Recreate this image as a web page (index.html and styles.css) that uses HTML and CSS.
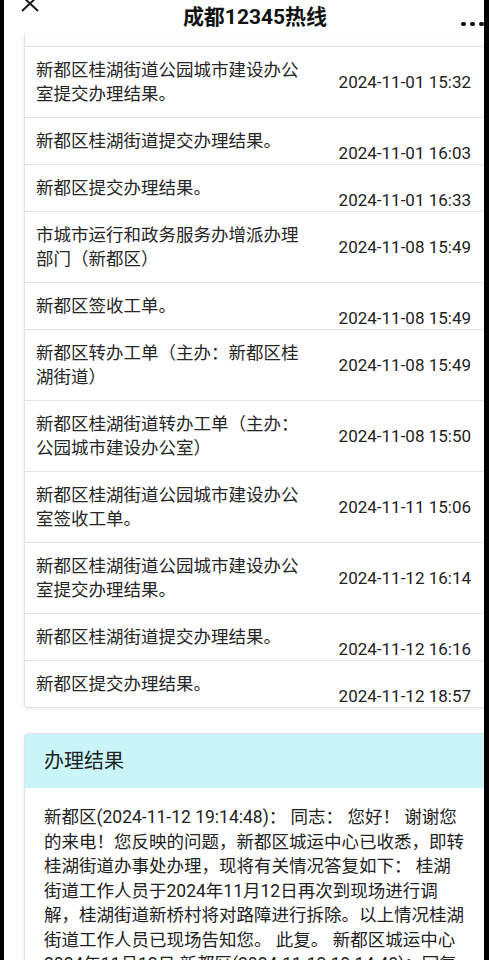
FILE: index.html
```html
<!DOCTYPE html>
<html lang="zh-CN">
<head>
    <meta charset="UTF-8">
    <meta name="viewport" content="width=device-width, initial-scale=1.0">
    <title>成都12345热线</title>
    <link rel="stylesheet" href="styles.css">
</head>
<body>
    <div class="screen">
        <header class="topbar">
            <span class="close">
                <svg width="18" height="18" viewBox="0 0 18 18"><path d="M1 1 L17 16 M17 1 L1 16" stroke="#1a1a1a" stroke-width="2" fill="none"/></svg>
            </span>
            <h1>成都12345热线</h1>
            <span class="more"><i></i><i></i><i></i></span>
        </header>

        <!-- 办理流程 -->
        <div class="card flow">
            <div class="flow-cut"></div>
            <div class="flow-row">
                <div class="flow-text">新都区桂湖街道公园城市建设办公室提交办理结果。</div>
                <div class="flow-time">2024-11-01 15:32</div>
            </div>
            <div class="flow-row">
                <div class="flow-text">新都区桂湖街道提交办理结果。</div>
                <div class="flow-time">2024-11-01 16:03</div>
            </div>
            <div class="flow-row">
                <div class="flow-text">新都区提交办理结果。</div>
                <div class="flow-time">2024-11-01 16:33</div>
            </div>
            <div class="flow-row">
                <div class="flow-text">市城市运行和政务服务办增派办理部门（新都区）</div>
                <div class="flow-time">2024-11-08 15:49</div>
            </div>
            <div class="flow-row">
                <div class="flow-text">新都区签收工单。</div>
                <div class="flow-time">2024-11-08 15:49</div>
            </div>
            <div class="flow-row">
                <div class="flow-text">新都区转办工单（主办：新都区桂湖街道）</div>
                <div class="flow-time">2024-11-08 15:49</div>
            </div>
            <div class="flow-row">
                <div class="flow-text">新都区桂湖街道转办工单（主办：公园城市建设办公室）</div>
                <div class="flow-time">2024-11-08 15:50</div>
            </div>
            <div class="flow-row">
                <div class="flow-text">新都区桂湖街道公园城市建设办公室签收工单。</div>
                <div class="flow-time">2024-11-11 15:06</div>
            </div>
            <div class="flow-row">
                <div class="flow-text">新都区桂湖街道公园城市建设办公室提交办理结果。</div>
                <div class="flow-time">2024-11-12 16:14</div>
            </div>
            <div class="flow-row">
                <div class="flow-text">新都区桂湖街道提交办理结果。</div>
                <div class="flow-time">2024-11-12 16:16</div>
            </div>
            <div class="flow-row">
                <div class="flow-text">新都区提交办理结果。</div>
                <div class="flow-time">2024-11-12 18:57</div>
            </div>
        </div>

        <!-- 办理结果 -->
        <div class="card result">
            <div class="result-head">办理结果</div>
            <div class="result-body">新都区(2024-11-12 19:14:48)： 同志： 您好！ 谢谢您的来电！您反映的问题，新都区城运中心已收悉，即转桂湖街道办事处办理，现将有关情况答复如下： 桂湖街道工作人员于2024年11月12日再次到现场进行调解，桂湖街道新桥村将对路障进行拆除。以上情况桂湖街道工作人员已现场告知您。 此复。 新都区城运中心2024年11月12日 新都区(2024-11-12 19:14:48)：回复</div>
        </div>
    </div>
</body>
</html>
```

FILE: styles.css
```css
body {
    margin: 0;
    background: #000; /* black edges of the photo */
    font-family: Roboto, "Noto Sans CJK SC", sans-serif;
    color: #262626;
}

.screen {
    margin-left: 4px;
    width: 480px;
    height: 960px;
    background: #fff;
    overflow: hidden;
}

/* Top bar */
.topbar {
    display: flex;
    align-items: center;
    height: 34px;
}

.close {
    width: 48px;
    align-self: flex-start;
    padding-left: 17px;
    margin-top: -5px;
    box-sizing: border-box;
    line-height: 0;
}

.topbar h1 {
    flex: 1;
    margin: 0;
    text-align: center;
    font-size: 21px;
    font-weight: bold;
    color: #111;
    line-height: 34px;
}

.more {
    width: 26px;
    display: flex;
    gap: 4.5px;
    align-self: flex-end;
    margin-bottom: 8px;
    padding-left: 3px;
    box-sizing: border-box;
}

.more i {
    width: 4.5px;
    height: 4.5px;
    border-radius: 50%;
    background: #111;
    flex: none;
}

/* Cards */
.card {
    margin-left: 20px;
    background: #fff;
    border: 1px solid #e2e4e6;
    border-right: none;
    border-radius: 4px 0 0 4px;
    box-shadow: 0 1px 4px rgba(0, 0, 0, 0.08);
}

.flow {
    border-top: none;
    border-radius: 0 0 0 4px;
}

.flow-cut {
    height: 12px;
}

.flow-row {
    display: flex;
    align-items: flex-start;
    padding: 11px 13px 11px 11px;
    border-top: 1px solid #e4e4e4;
    font-size: 17.5px;
    line-height: 24px;
}

.flow-text {
    width: 272px;
    flex: none;
}

.flow-time {
    margin-left: auto;
    margin-top: 12px;
    margin-bottom: -12px; /* sits low without growing the row */
    font-size: 17px;
    white-space: nowrap;
    color: #222;
}

.result {
    margin-top: 25px;
}

.result-head {
    background: #c9f5f8;
    height: 54px;
    line-height: 54px;
    padding-left: 19px;
    font-size: 20px;
    color: #222;
}

.result-body {
    padding: 17px 19px 20px 19px;
    font-size: 17.5px;
    line-height: 24.5px;
    color: #222;
}
```
